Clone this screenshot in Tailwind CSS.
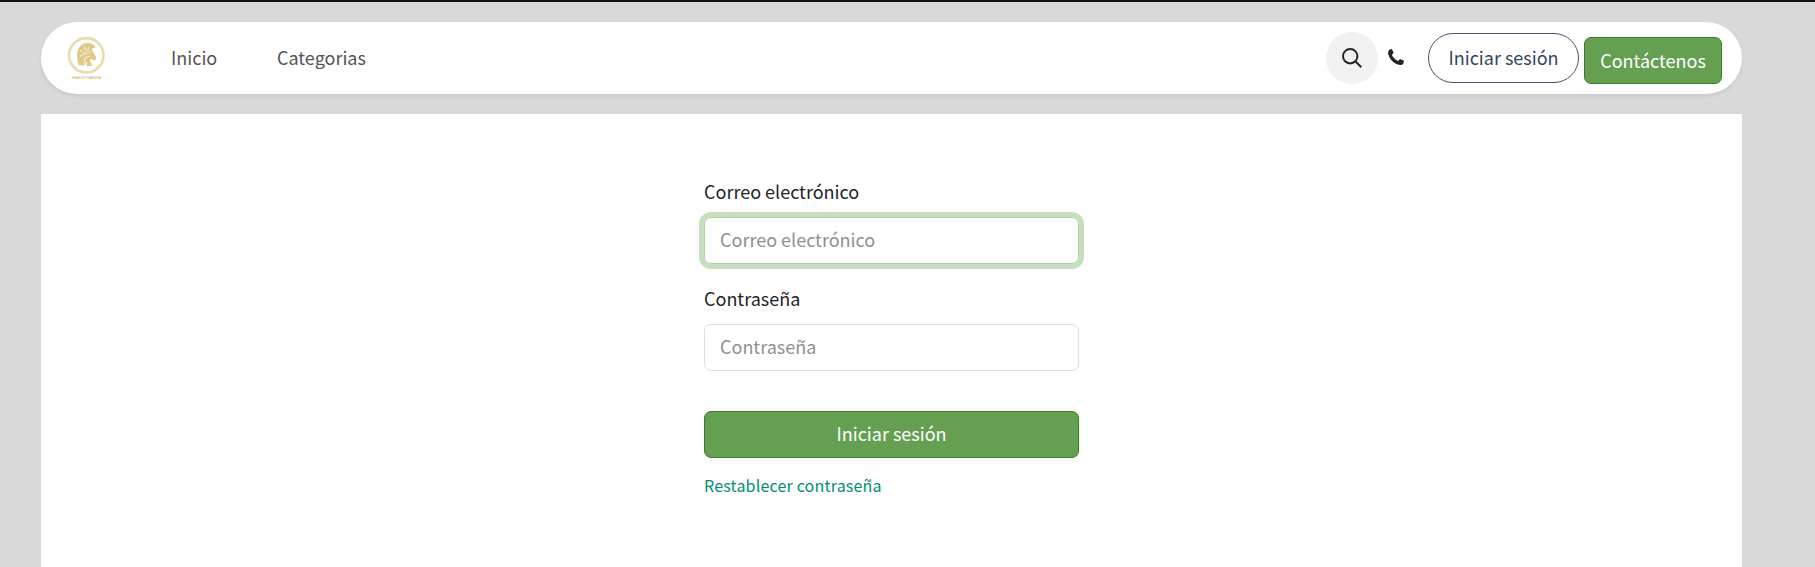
<!DOCTYPE html>
<html lang="es">
<head>
<meta charset="utf-8">
<title>Iniciar sesión</title>
<script src="https://cdn.jsdelivr.net/npm/@tailwindcss/browser@4"></script>
</head>
<body class="h-screen overflow-hidden bg-[#d9d9d9] border-t-2 border-[#121117] pl-[41px] pr-[73px] pt-5 font-['Noto_Sans_CJK_SC','Noto_Sans',sans-serif] text-[18px] leading-[28px] font-normal text-[#212529] flex flex-col">
<header class="h-[72px] shrink-0 rounded-[36px] bg-white shadow-[0_2px_4px_rgba(0,0,0,0.08)] pl-5 pr-5 flex items-start">
  <svg class="w-[50px] h-[50px] mt-[11px]" viewBox="0 0 50 50" aria-label="Maestranza">
    <rect y="43" width="50" height="6" fill="#fefdf8"/>
    <circle cx="25.3" cy="22.3" r="17.2" fill="none" stroke="#e8dcaa" stroke-width="2.6"/>
    <path d="M18 32C15.500 27 15.500 20 17.500 15.500C20 11 24 9.500 28 10C31 10.300 33.500 12 34.500 14.500L30.500 16L32.500 20L35 23.500L34.500 27L31.500 27.500L30.500 25.500L29 27L31 33H25.500L26 28L23 32.500Z" fill="#dfc987"/>
    <path d="M19 23.500l4-2.500 7-2.500M19 17l3.500 3.500M23.500 13.500l1 5.500M28 14l-1.500 4M23 31l1-6 5-2" fill="none" stroke="#fff" stroke-width=".7"/>
    <text x="25.300" y="45.500" text-anchor="middle" textLength="29" lengthAdjust="spacing" font-size="4.300" font-family="Liberation Sans, sans-serif" fill="#c9b56c">MAESTRANZA</text>
  </svg>
  <nav class="flex ml-[60px] mt-[21px] text-[#555]">
    <a class="w-[106px]">Inicio</a><a>Categorias</a>
  </nav>
  <div class="ml-auto flex items-start">
    <div class="w-[52px] h-[52px] mt-[10px] rounded-full bg-[#f1f1f1] flex items-center justify-center">
      <svg class="w-5 h-5" viewBox="0 0 20 20" fill="none" stroke="#212529" stroke-width="2"><circle cx="8.200" cy="8.200" r="7.200"/><path d="M13.300 13.300l6 6"/></svg>
    </div>
    <svg class="w-4 h-4 ml-[10px] mt-[27px]" viewBox="0 0 16 16" fill="#212529"><path d="M1.200.8L3.900 0 5.700 4.100 3.900 5.700C4.900 8.300 7 10.600 10.100 12l1.800-1.900L16 11.800l-.8 3.100-1.900 1.100C6.500 15.700.5 10 0 3.200z"/></svg>
    <a class="w-[151px] h-[50px] mt-[11px] ml-6 pb-0.5 rounded-full border border-[#44546a] text-[#34465b] flex items-center justify-center">Iniciar sesión</a>
    <a class="w-[138px] h-[47px] mt-[15px] ml-[5px] pb-0.5 rounded-[7px] border border-[#35821c] bg-[#65a052] text-white flex items-center justify-center">Contáctenos</a>
  </div>
</header>
<main class="mt-5 grow bg-white">
  <form class="w-[375px] ml-[663px] pt-[63px] flex flex-col">
    <label class="h-[40px]">Correo electrónico</label>
    <input class="h-[47px] px-[15px] pb-[3px] rounded-[7px] border border-[#b2d0a6] outline-none shadow-[0_0_0_5px_#c8dec0] placeholder:text-[#909090]" placeholder="Correo electrónico">
    <label class="h-[40px] mt-[20px]">Contraseña</label>
    <input class="h-[47px] px-[15px] pb-[3px] rounded-[7px] border border-[#dedede] outline-none placeholder:text-[#909090]" placeholder="Contraseña">
    <button type="button" class="h-[47px] mt-10 pb-[3px] rounded-[7px] border border-[#35821c] bg-[#65a052] text-white">Iniciar sesión</button>
    <a class="mt-[13px] text-[16px] tracking-[0.19px] text-[#008f75]">Restablecer contraseña</a>
  </form>
</main>
</body>
</html>
